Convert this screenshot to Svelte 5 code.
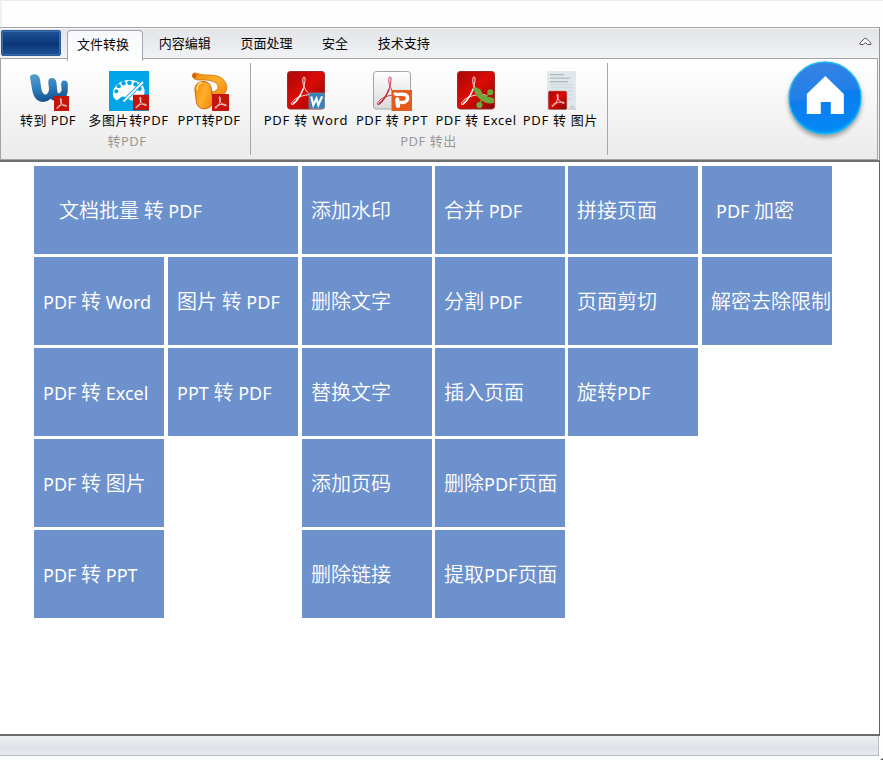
<script lang="ts">
	interface Tool {
		icon: string;
		label: string;
		width: number;
		spacing?: number;
	}

	interface Tile {
		label: string;
		col: number;
		row: number;
		wide?: boolean;
		indent?: number;
	}

	const tabs = ['文件转换', '内容编辑', '页面处理', '安全', '技术支持'];
	let activeTab = $state('文件转换');

	const groups: { title: string; tools: Tool[] }[] = [
		{
			title: '转PDF',
			tools: [
				{ icon: 'word', label: '转到 PDF', width: 80 },
				{ icon: 'palette', label: '多图片转PDF', width: 81, spacing: 0.6 },
				{ icon: 'ppt', label: 'PPT转PDF', width: 80 }
			]
		},
		{
			title: 'PDF 转出',
			tools: [
				{ icon: 'toWord', label: 'PDF 转 Word', width: 86, spacing: 0.8 },
				{ icon: 'toPpt', label: 'PDF 转 PPT', width: 86, spacing: 0.6 },
				{ icon: 'toExcel', label: 'PDF 转 Excel', width: 82, spacing: 0.6 },
				{ icon: 'toImage', label: 'PDF 转 图片', width: 87, spacing: 0.7 }
			]
		}
	];

	const tiles: Tile[] = [
		{ label: '文档批量 转 PDF', col: 1, row: 1, wide: true, indent: 25 },
		{ label: 'PDF 转 Word', col: 1, row: 2 },
		{ label: 'PDF 转 Excel', col: 1, row: 3 },
		{ label: 'PDF 转 图片', col: 1, row: 4 },
		{ label: 'PDF 转 PPT', col: 1, row: 5 },
		{ label: '图片 转 PDF', col: 2, row: 2 },
		{ label: 'PPT 转 PDF', col: 2, row: 3 },
		{ label: '添加水印', col: 3, row: 1 },
		{ label: '删除文字', col: 3, row: 2 },
		{ label: '替换文字', col: 3, row: 3 },
		{ label: '添加页码', col: 3, row: 4 },
		{ label: '删除链接', col: 3, row: 5 },
		{ label: '合并 PDF', col: 4, row: 1 },
		{ label: '分割 PDF', col: 4, row: 2 },
		{ label: '插入页面', col: 4, row: 3 },
		{ label: '删除PDF页面', col: 4, row: 4 },
		{ label: '提取PDF页面', col: 4, row: 5 },
		{ label: '拼接页面', col: 5, row: 1 },
		{ label: '页面剪切', col: 5, row: 2 },
		{ label: '旋转PDF', col: 5, row: 3 },
		{ label: 'PDF 加密', col: 6, row: 1, indent: 14 },
		{ label: '解密去除限制', col: 6, row: 2 }
	];

	// Latin runs are set slightly smaller than the Chinese around them
	function splitRuns(text: string) {
		return text.match(/[\x20-\x7e]+|[^\x20-\x7e]+/g) ?? [];
	}
</script>

{#snippet badge(x: number, y: number, size: number)}
	<svg {x} {y} width={size} height={size} viewBox="0 0 16 16">
		<rect width="16" height="16" rx="0.6" fill="#c3150b" />
		<path d="M7 2.5C8.6 2.7 7.8 6 7.2 8C6.3 10.8 4.3 13.8 3 13.2C2.1 12.4 5.4 10 8.8 9.7C12 9.3 14 10 13.4 10.9C12.6 11.7 8.7 9.4 7.6 6.8C7 5 6.4 3 7 2.5Z" fill="none" stroke="#fff" stroke-width="0.75" />
	</svg>
{/snippet}

{#snippet swoosh(color: string)}
	<path d="M18.8 6C20.8 5.5 20 11 18.8 16C16.8 22 10.5 34.3 6.8 33.6C4.8 32.4 10 26.5 17.5 24.8C25 23 31 23 31.5 25.5C30 28.5 21.7 22 19.4 16.5C17.6 12.8 17.2 6.5 18.8 6Z" fill="none" stroke={color} stroke-width="0.9" />
	<path d="M18.2 18C15.4 24.8 12 30 7.8 32.9" fill="none" stroke={color} stroke-width="1.4" />
{/snippet}

{#snippet toolIcon(name: string)}
	<svg class="tool-icon" width="42" height="42" viewBox="0 0 42 42">
		{#if name === 'word'}
			<path d="M3 7C2.4 2.4 10.5 2 12.4 6.4C14.2 11.5 13.5 20.5 17 23C19.6 25 21.9 21.5 22 18C22 14.5 20.6 11.3 21.6 9C23.5 5.5 29 7 29.4 11.2L30.4 21C31.2 24 34.8 21.4 34.6 18C34.4 15 33.8 13.8 34.4 11.4C35.6 8.3 40.7 9 40.8 12.8V20C39.8 29 33 32 27.5 30C25 29 24.5 28.4 23.4 27.8C21 30.8 14 32.6 9.6 28.5C4.7 23.8 5 15 3 7Z" fill="url(#blue)" />
			{@render badge(27, 25, 15)}
		{:else if name === 'palette'}
			<rect x="1" width="40" height="40" fill="#00a5e8" />
			<path d="M20.5 9C29 8.2 37 13.5 36.6 20.5C36.3 28 30 30 24 29.5C19.5 28.5 18 25.5 15 25.6C11 26 10.5 31.5 6.8 28C1.5 20.7 8 10 20.5 9Z" fill="#fff" />
			<g fill="#00a5e8">
				<circle cx="8.3" cy="20.2" r="2" />
				<circle cx="10.8" cy="15.2" r="2.1" />
				<circle cx="15.6" cy="12.2" r="2.2" />
				<circle cx="21.5" cy="11.8" r="2.4" />
				<circle cx="27.5" cy="13.3" r="2.2" />
				<circle cx="31.6" cy="17.7" r="2.2" />
			</g>
			<path d="M35 11L15 31" stroke="#00a5e8" stroke-width="3.8" />
			<path d="M35 11L15.5 30.5" stroke="#fff" stroke-width="1.8" />
			{@render badge(25, 23.5, 16)}
		{:else if name === 'ppt'}
			<path d="M4.5 3.5C4 7.4 7 9 11 9C19 8.6 27 9.6 29.4 13.6C31.4 17.6 28.5 20.6 24 20.8V27C34.5 27 40.2 21.3 38.5 14.2C36 6 29.5 4 20 4C13 4 9.7 2.5 7.4 2C6 1.8 5 2.2 4.5 3.5Z" fill="url(#orange)" stroke="#c26a05" stroke-width="0.7" />
			<rect x="7.6" y="10.4" width="16.4" height="27.4" rx="7.6" transform="rotate(-7 16 24)" fill="url(#orange)" stroke="#b95a08" stroke-width="0.8" />
			<path d="M9.2 19Q9 11.8 14 11.8" fill="none" stroke="#ffe189" stroke-width="1.4" />
			<circle cx="6.5" cy="4.8" r="2.1" fill="#d85811" />
			{@render badge(24, 23, 17)}
		{:else if name === 'toWord'}
			<rect x="2.5" y="0.5" width="37" height="37.5" rx="2.7" fill="url(#red)" stroke="#9f2b28" />
			{@render swoosh('#fff')}
			<rect x="24" y="22" width="15.5" height="15.5" rx="1" fill="#3484b8" stroke="#75aac8" stroke-width="0.6" />
			<path d="M26.2 25.5L28.3 34L31.5 27.5L33.3 34L37.1 25.4" fill="none" stroke="#fff" stroke-width="2.2" />
		{:else if name === 'toPpt'}
			<rect x="2.5" y="0.5" width="37" height="37.5" rx="2.7" fill="url(#silver)" stroke="#a5a5a5" />
			{@render swoosh('#c22438')}
			<rect x="20.5" y="19" width="20.5" height="21" fill="#e45c1c" />
			<path d="M24.2 23C28 24.4 34.4 21.6 36.3 25.3C37.8 29.6 34 32 30 31.4" fill="none" stroke="#fff" stroke-width="3.4" stroke-linecap="round" />
			<path d="M26.3 28.5L27 34.8" stroke="#fff" stroke-width="4.3" stroke-linecap="round" />
		{:else if name === 'toExcel'}
			<rect x="2.5" y="0.5" width="37" height="37.5" rx="2.7" fill="url(#red)" stroke="#9f2b28" />
			{@render swoosh('#fff')}
			<path d="M18 16.5C22 15.7 26 18 27 22C28.3 26 35 25.5 39 27.5V32C33 33.2 29.5 31.5 26 29C22 26 20 23 18 16.5Z" fill="#70a639" />
			<circle cx="35.3" cy="21.2" r="3" fill="#70a639" />
			<circle cx="24.4" cy="34" r="3.1" fill="#70a639" />
			<path d="M25 31C29 28 32 23.5 36 21" fill="none" stroke="#70a639" stroke-width="1.4" />
		{:else}
			<path d="M7 0H36V38H7Z" fill="#e1e8eb" />
			<path d="M7.5 38.2H36" stroke="#bfc8cd" />
			<path d="M10 3.6H24M10 7.1H30M10 10.7H28" stroke="#b0bcc3" stroke-width="1.4" />
			<path d="M10 13.8H33M10 16.8H33M27 20H33M27 24H33M27 28H33" stroke="#cbd4d9" />
			<path d="M29 38L32 33L36 38Z" fill="#cbd2d5" />
			<rect x="8.6" y="20.2" width="18" height="18" rx="1.2" fill="url(#red)" stroke="#a11c18" stroke-width="0.6" />
			<path d="M17.3 23.2C19.3 23.3 17.5 30 15.2 33.3C12.5 36.5 10.4 35.6 13.8 33C17.7 30.8 25.3 30.4 24.1 32.3C21 32.6 16 27 17.3 23.2Z" fill="none" stroke="#fff" stroke-width="0.8" />
		{/if}
	</svg>
{/snippet}

<svg class="defs" width="0" height="0" aria-hidden="true">
	<defs>
		<linearGradient id="blue" x1="0" y1="0" x2="0.2" y2="1">
			<stop offset="0" stop-color="#5aa0d0" />
			<stop offset="0.55" stop-color="#2f7dbc" />
			<stop offset="1" stop-color="#175391" />
		</linearGradient>
		<linearGradient id="orange" x1="0" y1="0" x2="1" y2="1">
			<stop offset="0" stop-color="#f28a08" />
			<stop offset="0.5" stop-color="#ffae2c" />
			<stop offset="1" stop-color="#f08102" />
		</linearGradient>
		<linearGradient id="red" x1="0" y1="0" x2="1" y2="1">
			<stop offset="0" stop-color="#a80907" />
			<stop offset="0.48" stop-color="#dc0b07" />
			<stop offset="1" stop-color="#850805" />
		</linearGradient>
		<linearGradient id="silver" x1="0" y1="0" x2="0" y2="1">
			<stop offset="0" stop-color="#fff" />
			<stop offset="1" stop-color="#d9d9d9" />
		</linearGradient>
		<linearGradient id="home" x1="0.25" y1="0" x2="0.45" y2="1">
			<stop offset="0" stop-color="#3a82e0" />
			<stop offset="0.5" stop-color="#1f80ea" />
			<stop offset="1" stop-color="#079cf9" />
		</linearGradient>
	</defs>
</svg>

<div class="window">
	<div class="titlebar"></div>

	<div class="tabbar">
		<button class="app-button" aria-label="菜单"></button>
		<div class="tabs">
			{#each tabs as tab}
				<button class="tab" class:active={tab === activeTab} onclick={() => (activeTab = tab)}>{tab}</button>
			{/each}
		</div>
		<svg class="collapse" width="13" height="10" viewBox="0 0 13 10" fill="#fff" stroke="#555" stroke-width="1">
			<path d="M1 6L5.5 1.4H7L11.8 6V7.5H8.5L6.4 5.6L4.2 7.5H1Z" />
		</svg>
	</div>

	<div class="ribbon">
		{#each groups as group}
			<section class="group">
				<div class="tools">
					{#each group.tools as tool}
						<button class="tool" style:width="{tool.width}px" style:letter-spacing="{tool.spacing ?? 0.4}px">
							{@render toolIcon(tool.icon)}
							<span>{tool.label}</span>
						</button>
					{/each}
				</div>
				<div class="group-title">{group.title}</div>
			</section>
		{/each}
		<button class="home" aria-label="首页">
			<svg width="84" height="84" viewBox="0 0 84 84">
				<circle cx="42" cy="40" r="36" fill="url(#home)" stroke="#20bdf1" stroke-width="1.4" />
				<path d="M6.8 43C28 44 53 29 76.7 32A35 35 0 0 1 6.8 43Z" fill="#007af1" opacity="0.55" />
				<path d="M42.3 18L60.8 36V56H47.8V44H37.8V56H23.8V36Z" fill="#fff" />
			</svg>
		</button>
	</div>

	<main>
		<div class="grid">
			{#each tiles as tile}
				<button
					class="tile"
					class:wide={tile.wide}
					style:grid-column={tile.wide ? `${tile.col} / span 2` : tile.col}
					style:grid-row={tile.row}
					style:padding-left="{tile.indent ?? 9}px"
				>{#each splitRuns(tile.label) as run}<span class:latin={run.charCodeAt(0) < 128}>{run}</span>{/each}</button>
			{/each}
		</div>
	</main>

	<footer></footer>
	<div class="grip"></div>
</div>

<style>
	:global(body) {
		background: #fefefe;
	}

	.defs {
		position: absolute;
	}

	.window {
		display: flex;
		flex-direction: column;
		box-sizing: border-box;
		width: 883px;
		height: 760px;
		overflow: hidden;
		font: 13px 'Noto Sans', 'Noto Sans CJK SC', sans-serif;
		color: #080808;
	}

	button {
		border: 0;
		padding: 0;
		background: none;
		color: inherit;
		font: inherit;
		white-space: pre;
	}

	.titlebar {
		box-sizing: border-box;
		height: 27px;
		border-top: 1px solid #ececec;
		border-left: 2px solid #f1f1f1;
	}

	.tabbar {
		display: flex;
		box-sizing: border-box;
		width: 880px;
		height: 31px;
		border-top: 1px solid #a5a5a8;
		border-right: 1px solid #949497;
		background: linear-gradient(#e2e4e8, #f1f2f4);
		box-shadow: inset 0 1px #f7f7f8;
	}

	.app-button {
		box-sizing: border-box;
		width: 60px;
		height: 26px;
		margin: 2px 6px 0 1px;
		border: 1px solid #2a5c9c;
		border-radius: 2px;
		background: linear-gradient(#1f5297, #0b3678 55%, #1f5297);
		box-shadow: inset 0 0 0 1px #386ca8;
	}

	.tabs {
		display: flex;
	}

	.tab {
		box-sizing: border-box;
		height: 29px;
		margin-top: 2px;
		padding: 0 14.8px 3px;
		line-height: 26px;
	}

	.tab.active {
		position: relative;
		width: 76px;
		height: 31px;
		padding: 0 4px 5px 0;
		margin-right: 1px;
		border: 1px solid #a3a7ad;
		border-bottom: 0;
		border-radius: 4px 4px 0 0;
		background: linear-gradient(#f7f8fa, #fff);
	}

	.collapse {
		margin: 9px 7px 0 auto;
	}

	.ribbon {
		display: flex;
		box-sizing: border-box;
		width: 878px;
		height: 102px;
		border: 1px solid #a1a4a9;
		background: linear-gradient(#fff, #f7f7f7 40%, #ebebeb);
		box-shadow: 1px 0 #f1f1f1, 2px 0 #949497;
	}

	.group {
		box-sizing: border-box;
		height: 92px;
		margin-top: 4px;
		padding-left: 7px;
		border-right: 1px solid #a7a7a7;
	}

	.group:first-child {
		width: 250px;
	}

	.group:nth-child(2) {
		width: 357px;
		padding-left: 12px;
	}

	.tools {
		display: flex;
	}

	.tool {
		display: flex;
		flex-direction: column;
		align-items: center;
		box-sizing: border-box;
		height: 69px;
		padding-top: 8px;
		line-height: 18px;
	}

	.tool-icon {
		flex: none;
		margin-bottom: -2px;
	}

	.group-title {
		padding-right: 4px;
		line-height: 18px;
		letter-spacing: 0.5px;
		text-align: center;
		color: #999;
	}

	.group:nth-child(2) .group-title {
		padding-right: 13px;
	}

	.home {
		width: 84px;
		height: 84px;
		margin: -1px 10px 0 auto;
		filter: drop-shadow(0 3px 2px #777a);
	}

	main {
		box-sizing: border-box;
		width: 880px;
		height: 576px;
		padding: 4px 0 0 34px;
		border-top: 2px solid #6f6f72;
		border-right: 1px solid #626262;
		border-bottom: 2px solid #6b6b6b;
		background: #fff;
	}

	.grid {
		display: grid;
		grid-template-columns: 134px 134px 133px 133px 134px 130px;
		grid-auto-rows: 88px;
		row-gap: 3px;
	}

	.tile {
		box-sizing: border-box;
		width: 130px;
		padding-top: 2px;
		overflow: hidden;
		background: #6d91cd;
		color: #fff;
		font-family: 'Noto Sans', 'Noto Sans CJK SC', sans-serif;
		font-size: 20px;
		font-weight: 350;
		line-height: 28px;
		text-align: left;
	}

	.tile.wide {
		width: 264px;
	}

	.latin {
		font-size: 18px;
		font-weight: 400;
	}

	footer {
		box-sizing: border-box;
		width: 879px;
		height: 20px;
		border: 1px solid #b8bbc1;
		border-top: 0;
		border-left: 0;
		background: linear-gradient(#eef0f2, #dfe3e8 65%, #e6e9ed);
	}

	.grip {
		width: 3px;
		height: 2px;
		margin: auto 0 0 auto;
		background: #555;
		clip-path: polygon(100% 0, 100% 100%, 0 100%);
	}
</style>
